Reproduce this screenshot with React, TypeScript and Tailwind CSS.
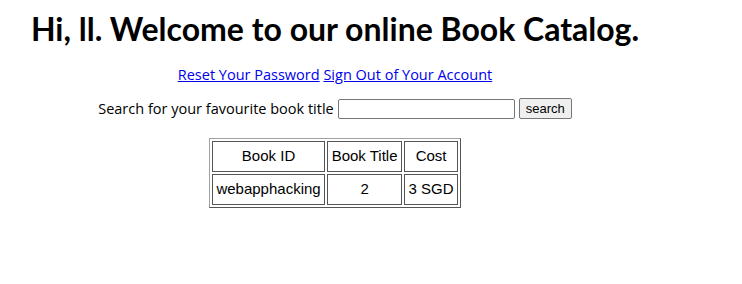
export default function App() {
  const rows = [{ id: "webapphacking", title: "2", cost: "3 SGD" }];
  return (
    <div className="w-[670px] bg-white text-black text-center">
      <h1 className="pt-[9px] text-[32px] font-bold leading-[40px] font-['Lato',sans-serif]">
        Hi, ll. Welcome to our online Book Catalog.
      </h1>
      <div className="mt-[16px] text-[14.5px] leading-[20px] font-['Open_Sans',sans-serif]">
        <a href="#" className="text-[#0000ee] underline">Reset Your Password</a>{" "}
        <a href="#" className="text-[#0000ee] underline">Sign Out of Your Account</a>
      </div>
      <form
        className="mt-[13px] flex items-center justify-center gap-[4px] text-[14.5px] font-['Open_Sans',sans-serif]"
        onSubmit={(e) => e.preventDefault()}
      >
        <span>Search for your favourite book title</span>
        <input
          type="text"
          className="w-[177px] h-[20px] border border-[#767676] rounded-[2px] px-1 text-[13px]"
        />
        <button className="h-[21px] px-[6px] border border-[#767676] rounded-[2px] bg-[#efefef] text-[13px] font-['Liberation_Sans',sans-serif] leading-[18px]">
          search
        </button>
      </form>
      <div className="mt-[18px] flex justify-center">
        <table className="border-separate border-spacing-[2px] border border-l-[#a0a0a0] border-t-[#a0a0a0] border-r-[#555] border-b-[#555] text-[15px] font-['Liberation_Sans',sans-serif]">
          <thead>
            <tr>
              <th className="font-normal border border-[#555] h-[31px] px-[3.5px]">Book ID</th>
              <th className="font-normal border border-[#555] px-[3.5px]">Book Title</th>
              <th className="font-normal border border-[#555] px-[3.5px]">Cost</th>
            </tr>
          </thead>
          <tbody>
            {rows.map((r) => (
              <tr key={r.id}>
                <td className="border border-[#555] h-[31px] px-[3.5px]">{r.id}</td>
                <td className="border border-[#555] px-[3.5px]">{r.title}</td>
                <td className="border border-[#555] px-[3.5px]">{r.cost}</td>
              </tr>
            ))}
          </tbody>
        </table>
      </div>
    </div>
  );
}
